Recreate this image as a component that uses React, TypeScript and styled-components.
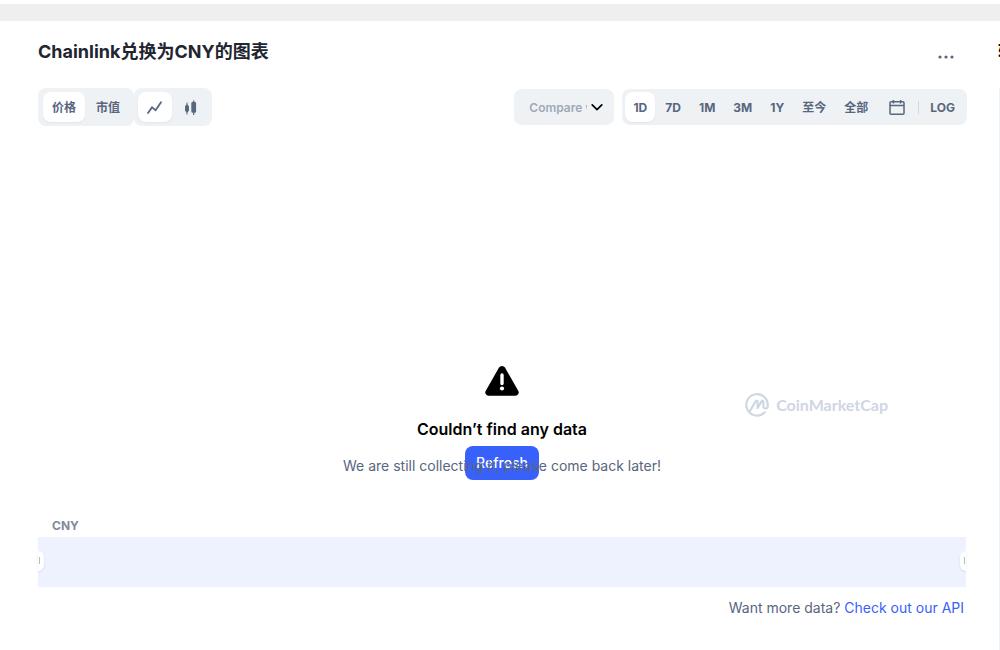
import React, { useState } from "react";
import styled, { createGlobalStyle } from "styled-components";

const GlobalStyle = createGlobalStyle`
  * { box-sizing: border-box; }
  body {
    margin: 0;
    background: #ffffff;
    color: #222531;
    font-family: Inter, "Noto Sans CJK SC", sans-serif;
    overflow: hidden;
  }
  button, select { font: inherit; color: inherit; border: 0; margin: 0; cursor: pointer; }
  h2, h3, p { margin: 0; }
`;

const Strip = styled.div`
  height: 17px;
  margin-top: 4px;
  background: #efefef;
`;

const Page = styled.div`
  display: grid;
  grid-template-columns: minmax(0, 1fr) 2px;
  column-gap: 31px;
  padding-left: 38px;
`;

const Main = styled.main`
  padding-top: 16px;
`;

const Aside = styled.aside`
  display: flex;
  flex-direction: column;
  align-items: flex-end;
  overflow: hidden;
  padding-top: 16px;
`;

const AsideTitle = styled.h2`
  width: 2px;
  height: 51px;
  font-size: 18px;
  line-height: 30px;
  color: #000000;
  white-space: nowrap;
  overflow: hidden;
`;

const AsideBody = styled.div`
  width: 1px;
  min-height: 564px;
  background: #eff2f5;
`;

const Header = styled.header`
  display: flex;
  justify-content: space-between;
  height: 51px;
`;

const Title = styled.h2`
  font-size: 18px;
  line-height: 30px;
  font-weight: 700;
`;

const MoreButton = styled.button`
  display: flex;
  align-items: center;
  justify-content: center;
  width: 42px;
  height: 40px;
  padding: 0;
  background: none;
  color: #58667e;
`;

const Toolbar = styled.div`
  display: flex;
  align-items: center;
  justify-content: space-between;
  height: 38px;
`;

const Side = styled.div<{ $gap: number }>`
  display: flex;
  align-items: center;
  gap: ${(p) => p.$gap}px;
`;

const Group = styled.div<{ $pad: string }>`
  display: flex;
  align-items: center;
  gap: 2px;
  padding: ${(p) => p.$pad};
  border-radius: 8px;
  background: #eff2f5;
  color: #58667e;
`;

const Tab = styled.button<{ $active?: boolean; $pad?: number }>`
  display: flex;
  align-items: center;
  justify-content: center;
  min-width: 30px;
  height: 30px;
  padding: 2px ${(p) => p.$pad ?? 8}px 0;
  border-radius: 8px;
  background: ${(p) => (p.$active ? "#ffffff" : "transparent")};
  box-shadow: ${(p) => (p.$active ? "0 1px 2px rgba(128, 138, 157, 0.12)" : "none")};
  font-size: 12px;
  line-height: 18px;
  font-weight: 700;
  white-space: nowrap;
`;

const Divider = styled.span`
  width: 1px;
  height: 13px;
  background: #cfd6e4;
`;

const CompareBox = styled.label`
  display: grid;
  align-items: center;
  width: 100px;
  height: 36px;
  border-radius: 8px;
  background: #eff2f5;

  > * { grid-area: 1 / 1; }
  > svg { justify-self: end; margin-right: 10px; pointer-events: none; }
`;

const CompareSelect = styled.select`
  appearance: none;
  width: 100%;
  height: 36px;
  padding: 0 27px 0 15px;
  border-radius: 8px;
  background: transparent;
  color: #a1a9b8;
  font-size: 12px;
  font-weight: 600;
  text-overflow: clip;
`;

const Chart = styled.section`
  position: relative;
  display: flex;
  flex-direction: column;
  align-items: center;
  height: 391px;
  margin-right: 1px;
  padding-top: 239px;
`;

const EmptyTitle = styled.h3`
  margin-top: 20px;
  font-size: 16px;
  line-height: 24px;
  font-weight: 600;
  color: #000000;
`;

const EmptyBody = styled.div`
  display: grid;
  justify-items: center;
  margin-top: 5px;

  > * { grid-area: 1 / 1; }
`;

const EmptyText = styled.p`
  z-index: 1;
  padding-top: 9px;
  font-size: 14px;
  line-height: 22px;
  color: #58667e;
  pointer-events: none;
`;

const Refresh = styled.button`
  height: 34px;
  padding: 0 11px 2px;
  border-radius: 8px;
  background: #3861fb;
  color: #ffffff;
  font-size: 14px;
  font-weight: 500;
`;

const Watermark = styled.div`
  position: absolute;
  right: 78px;
  bottom: 100px;
  display: flex;
  align-items: center;
  gap: 7px;
  color: #cfd6e4;
  font-family: Lato, sans-serif;
  font-size: 16px;
  line-height: 24px;
  font-weight: 700;
`;

const Currency = styled.p`
  padding-left: 14px;
  font-size: 12px;
  line-height: 18px;
  font-weight: 700;
  color: #808a9d;
`;

const Range = styled.div`
  display: flex;
  align-items: center;
  justify-content: space-between;
  height: 50px;
  margin: 2px 1px 0 0;
  background: #eef2ff;
`;

const Handle = styled.span<{ $side: "left" | "right" }>`
  display: flex;
  align-items: center;
  justify-content: ${(p) => (p.$side === "left" ? "flex-start" : "flex-end")};
  width: 6px;
  height: 20px;
  margin-top: -3px;
  border-radius: ${(p) => (p.$side === "left" ? "0 6px 6px 0" : "6px 0 0 6px")};
  background: #ffffff;
  box-shadow: 0 1px 2px rgba(88, 102, 126, 0.16);

  &::before {
    content: "";
    width: 1px;
    height: 7px;
    margin: 0 1px;
    background: #b5bccb;
  }
`;

const Footer = styled.p`
  margin-top: 10px;
  padding-right: 3px;
  text-align: right;
  font-size: 14px;
  line-height: 22px;
  font-weight: 400;
  color: #58667e;

  a { color: #3861fb; text-decoration: none; }
`;

const periods = ["1D", "7D", "1M", "3M", "1Y", "至今", "全部"];

const LineIcon = () => (
  <svg width="16" height="16" viewBox="0 0 16 16" fill="none" stroke="currentColor" strokeWidth="1.800" strokeLinejoin="miter" strokeLinecap="round">
    <path d="M1 13 5 7.400 8.600 10.200 14 2.300" />
  </svg>
);

const CandleIcon = () => (
  <svg width="16" height="16" viewBox="0 0 16 16" fill="currentColor">
    <path d="M3.500 2.500h1v1.800L6 6.500v4L4.500 12.800v1.700h-1v-1.700L2 10.500v-4L3.500 4.300Z" />
    <path d="M10.100.5h1.200v1.300h.3q1.500 0 1.500 1.500v8q0 1.500-1.500 1.500h-.3v2.200h-1.200v-2.200H9.800q-1.500 0-1.500-1.500v-8q0-1.500 1.500-1.500h.3Z" />
  </svg>
);

const CalendarIcon = () => (
  <svg width="16" height="16" viewBox="0 0 16 16" fill="none" stroke="currentColor" strokeWidth="1.5">
    <rect x="1" y="1.800" width="14" height="12.400" rx="1" />
    <path d="M1 5.600h14M4.400 0v3.400M11.600 0v3.400" />
  </svg>
);

const WarningIcon = () => (
  <svg width="34" height="32" viewBox="0 0 34 32">
    <path d="M14 2.6a3.5 3.5 0 0 1 6 0L33.2 25.800a3.200 3.200 0 0 1-2.800 4.900H3.600a3.200 3.200 0 0 1-2.800-4.900Z" fill="#000" />
    <path d="M17 10v8.500" stroke="#fff" strokeWidth="3.400" strokeLinecap="round" />
    <circle cx="17" cy="23.500" r="2.100" fill="#fff" />
  </svg>
);

const LogoIcon = () => (
  <svg width="24" height="24" viewBox="0 0 24 24" fill="none" stroke="currentColor" strokeWidth="2.200" strokeLinecap="round" strokeLinejoin="round">
    <path d="M19.700 19.300A10.700 10.700 0 1 1 22.700 12v1.200c0 2.900-4.300 3.100-4.300.2V9.200c0-1.800-1.300-1.900-2-.6L12.600 15V9.300c0-1.900-1.300-2.100-2.200-.6L4.600 18.600" />
  </svg>
);

export default function App() {
  const [metric, setMetric] = useState("价格");
  const [kind, setKind] = useState("line");
  const [period, setPeriod] = useState("1D");

  return (
    <>
      <GlobalStyle />
      <Strip />
      <Page>
        <Main>
          <Header>
            <Title>Chainlink兑换为CNY的图表</Title>
            <MoreButton aria-label="More">
              <svg width="16" height="4" viewBox="0 0 16 4" fill="currentColor">
                <circle cx="2" cy="2" r="1.600" />
                <circle cx="8" cy="2" r="1.600" />
                <circle cx="14" cy="2" r="1.600" />
              </svg>
            </MoreButton>
          </Header>
          <Toolbar>
            <Side $gap={0}>
              <Group $pad="4px 5px">
                {["价格", "市值"].map((m) => (
                  <Tab key={m} $pad={9} $active={m === metric} onClick={() => setMetric(m)}>{m}</Tab>
                ))}
              </Group>
              <Group $pad="4px">
                <Tab $pad={9} $active={kind === "line"} onClick={() => setKind("line")} aria-label="Line"><LineIcon /></Tab>
                <Tab $pad={9} $active={kind === "candle"} onClick={() => setKind("candle")} aria-label="Candlestick"><CandleIcon /></Tab>
              </Group>
            </Side>
            <Side $gap={8}>
              <CompareBox>
                <CompareSelect aria-label="Compare with" defaultValue="">
                  <option value="">Compare with</option>
                </CompareSelect>
                <svg width="14" height="14" viewBox="0 0 14 14" fill="none" stroke="#000" strokeWidth="1.700" strokeLinecap="round" strokeLinejoin="round">
                  <path d="m2.200 4.800 4.800 4.800 4.800-4.800" />
                </svg>
              </CompareBox>
              <Group $pad="3px">
                {periods.map((p) => (
                  <Tab key={p} $active={p === period} onClick={() => setPeriod(p)}>{p}</Tab>
                ))}
                <Tab $pad={11} aria-label="Calendar"><CalendarIcon /></Tab>
                <Divider />
                <Tab $pad={9}>LOG</Tab>
              </Group>
            </Side>
          </Toolbar>
          <Chart>
            <WarningIcon />
            <EmptyTitle>Couldn’t find any data</EmptyTitle>
            <EmptyBody>
              <EmptyText>We are still collecting it, please come back later!</EmptyText>
              <Refresh>Refresh</Refresh>
            </EmptyBody>
            <Watermark>
              <LogoIcon />
              CoinMarketCap
            </Watermark>
          </Chart>
          <Currency>CNY</Currency>
          <Range>
            <Handle $side="left" />
            <Handle $side="right" />
          </Range>
          <Footer>
            Want more data? <a href="#api">Check out our API</a>
          </Footer>
        </Main>
        <Aside>
          <AsideTitle>转</AsideTitle>
          <AsideBody />
        </Aside>
      </Page>
    </>
  );
}
